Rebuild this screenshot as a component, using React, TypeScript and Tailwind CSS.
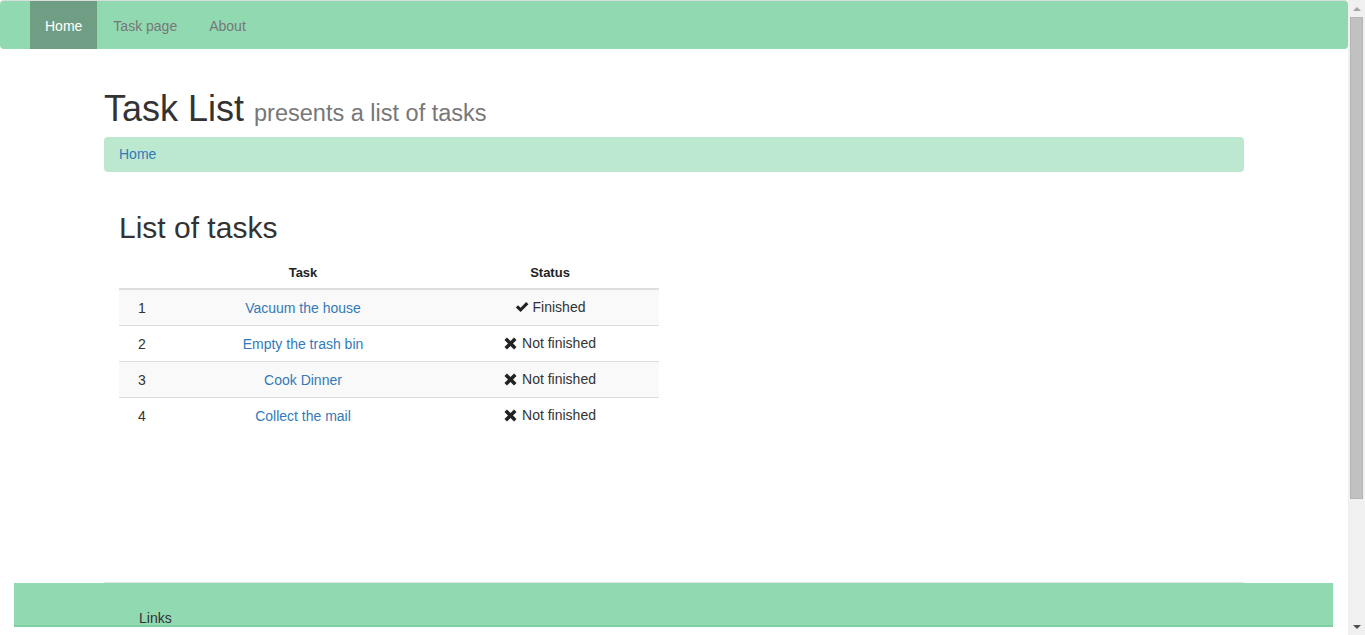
import React from 'react';

const tasks = [
  { id: 1, name: 'Vacuum the house', done: true },
  { id: 2, name: 'Empty the trash bin', done: false },
  { id: 3, name: 'Cook Dinner', done: false },
  { id: 4, name: 'Collect the mail', done: false },
];

function OkIcon() {
  return (
    <svg viewBox="0 0 14 14" className="w-[14px] h-[14px] mr-[4px]" fill="#222">
      <path d="M0.8 7.4 L3 5.2 L5.6 7.8 L11.2 2 L13.4 4.2 L5.6 12 Z" />
    </svg>
  );
}

function RemoveIcon() {
  return (
    <svg viewBox="0 0 14 14" className="w-[13px] h-[13px] mr-[5px]" fill="#222">
      <path d="M3.2 0.5 L7 4.3 L10.8 0.5 L13.5 3.2 L9.7 7 L13.5 10.8 L10.8 13.5 L7 9.7 L3.2 13.5 L0.5 10.8 L4.3 7 L0.5 3.2 Z" />
    </svg>
  );
}

export default function App() {
  return (
    <div className="relative w-[1365px] min-h-[635px] bg-white text-[14px] text-[#333] font-['Liberation_Sans',Arial,sans-serif]">
      <div className="w-[1348px]">
        {/* Navbar */}
        <nav className="h-[49px] bg-[#91d9b1] border-t border-t-[#d8ded9] rounded-[4px] flex items-stretch pl-[30px]">
          <a className="px-[15px] pt-[2px] flex items-center bg-[#6f9e84] text-white">Home</a>
          <a className="pl-[16px] pr-[15px] pt-[2px] flex items-center text-[#777]">Task page</a>
          <a className="pl-[17px] pr-[15px] pt-[2px] flex items-center text-[#777]">About</a>
        </nav>

        <div className="w-[1140px] mx-auto">
          <h1 className="mt-[40px] leading-[40px] text-[36px] text-[#333]">
            Task List <small className="text-[23.5px] text-[#777]">presents a list of tasks</small>
          </h1>

          <div className="mt-[4px] h-[35px] bg-[#bde8d0] rounded-[4px] px-[15px] flex items-center">
            <a className="text-[#337ab7]">Home</a>
          </div>

          <div className="px-[15px]">
            <h2 className="mt-[39px] text-[30px] leading-[33px] text-[#333]">List of tasks</h2>

            <table className="mt-[13px] w-[540px] border-collapse">
              <thead>
                <tr className="h-[32px] border-b-2 border-b-[#ddd]">
                  <th className="w-[46px]"></th>
                  <th className="w-[276px] text-[13px] font-bold text-center text-[#222]">Task</th>
                  <th className="text-[13px] font-bold text-center text-[#222]">Status</th>
                </tr>
              </thead>
              <tbody>
                {tasks.map((t, i) => (
                  <tr key={t.id} className={`h-[36px] border-t border-t-[#ddd] ${i % 2 === 0 ? 'bg-[#f9f9f9]' : 'bg-white'}`}>
                    <td className="text-center pt-[2px]">{t.id}</td>
                    <td className="text-center pt-[2px] text-[#337ab7]">{t.name}</td>
                    <td className="text-center pt-[2px]">
                      <span className="inline-flex items-center">
                        {t.done ? <OkIcon /> : <RemoveIcon />}
                        {t.done ? 'Finished' : 'Not finished'}
                      </span>
                    </td>
                  </tr>
                ))}
              </tbody>
            </table>
          </div>

          <hr className="mt-[149px] border-t border-t-[#e5e5e5]" />
        </div>

        {/* Footer */}
        <footer className="ml-[14px] mr-[15px] h-[44px] bg-[#91d9b1] border-b-2 border-b-[#7fd09f] pl-[125px] pt-[25px] leading-[20px]">
          <span className="text-[#333]">Links</span>
        </footer>
        <div className="h-[40px]"></div>
      </div>

      {/* fake scrollbar */}
      <div className="absolute top-0 right-0 w-[17px] h-[635px] bg-[#f0f0f0] flex flex-col items-center">
        <div className="h-[17px] flex items-center justify-center">
          <div className="w-0 h-0 border-l-[4px] border-r-[4px] border-b-[4px] border-l-transparent border-r-transparent border-b-[#a3a3a3]"></div>
        </div>
        <div className="w-[13px] h-[482px] bg-[#c1c1c1] border border-[#b5b5b5]"></div>
        <div className="flex-1"></div>
        <div className="h-[17px] flex items-center justify-center">
          <div className="w-0 h-0 border-l-[4px] border-r-[4px] border-t-[4px] border-l-transparent border-r-transparent border-t-[#505050]"></div>
        </div>
      </div>
    </div>
  );
}
